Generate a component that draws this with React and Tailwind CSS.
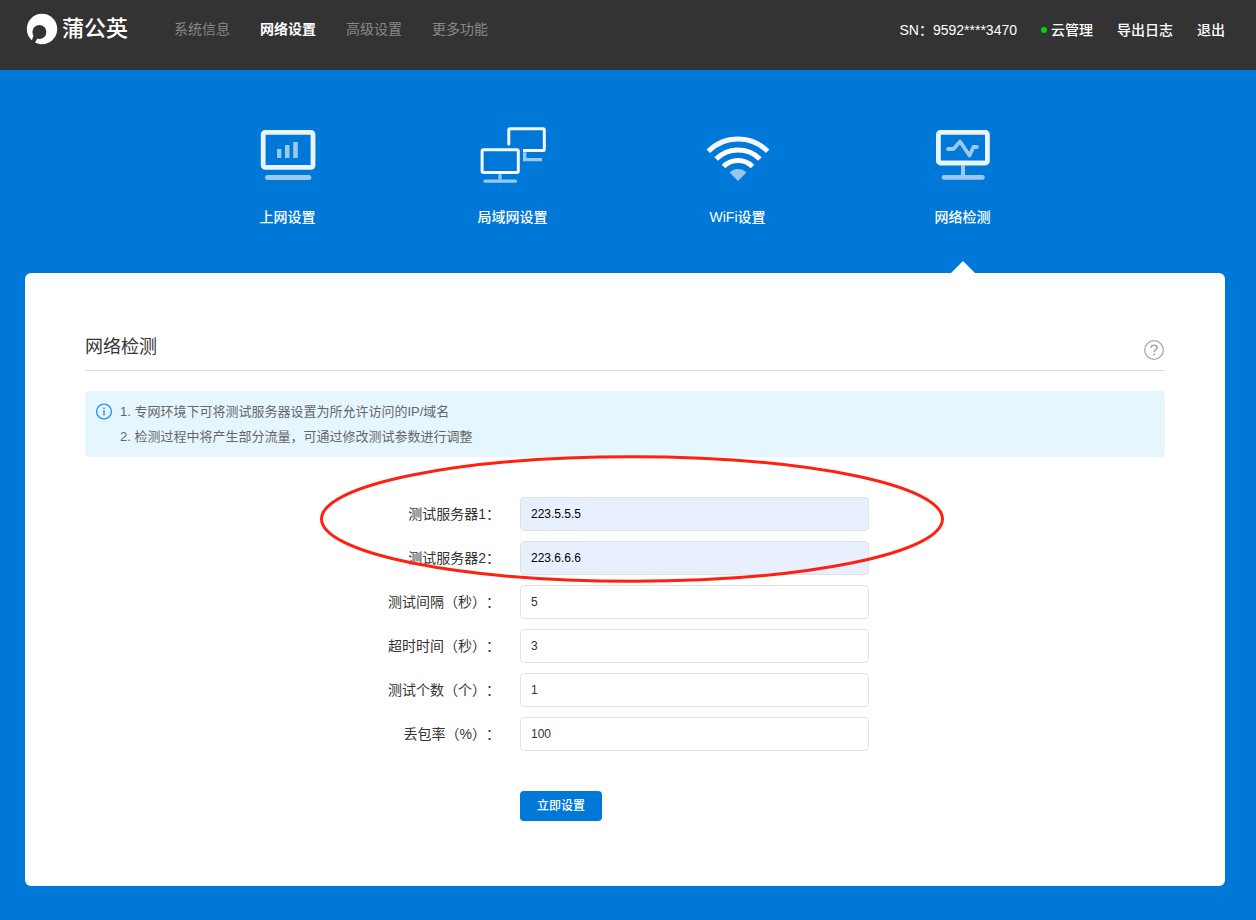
import { useState } from "react";

const topLinks = ["系统信息", "网络设置", "高级设置", "更多功能"];

// All fields in the detection form
const fields = [
  { id: "server1", label: "测试服务器1：", value: "223.5.5.5", filled: true },
  { id: "server2", label: "测试服务器2：", value: "223.6.6.6", filled: true },
  { id: "interval", label: "测试间隔（秒）：", value: "5" },
  { id: "timeout", label: "超时时间（秒）：", value: "3" },
  { id: "count", label: "测试个数（个）：", value: "1" },
  { id: "loss", label: "丢包率（%）：", value: "100" },
];

function Logo() {
  return (
    <a href="#" className="flex items-center gap-1 text-white">
      <svg width="32" height="32" viewBox="0 0 32 32" aria-hidden="true">
        <circle cx="16" cy="16" r="15.2" fill="#fff" />
        <circle cx="13.4" cy="19" r="7" fill="#333" />
        <path d="M7.4 22.5L6.2 26.6L3 30L8.2 31.5L9.2 29.2L11.4 25.5Z" fill="#333" />
      </svg>
      <span className="text-[22px] leading-8 font-medium">蒲公英</span>
    </a>
  );
}

function InternetIcon() {
  return (
    <svg width="70" height="60" viewBox="0 0 70 60" fill="none" aria-hidden="true">
      <rect x="10.2" y="7.4" width="49.8" height="35" rx="2" stroke="#eaf4fd" strokeWidth="4.8" />
      <g fill="#fff" fillOpacity="0.6">
        <rect x="24" y="24" width="4.3" height="9" />
        <rect x="32" y="20" width="4.5" height="13" />
        <rect x="40.2" y="17" width="4.6" height="16" />
        <rect x="12" y="50" width="46.3" height="5" rx="2.5" />
      </g>
    </svg>
  );
}

function LanIcon() {
  return (
    <svg width="70" height="60" viewBox="0 0 70 60" fill="none" aria-hidden="true">
      <rect x="4.1" y="24.8" width="36.2" height="22.8" rx="1.5" stroke="#f4f9fe" strokeWidth="3" />
      <path d="M30.8 19V5.2Q30.8 3.8 32.2 3.8H64.8Q66.3 3.8 66.3 5.2V24.2Q66.3 25.6 64.8 25.6H45" stroke="#f4f9fe" strokeWidth="3" />
      <circle cx="30.8" cy="19" r="1.5" fill="#fff" />
      <g stroke="#fff" strokeOpacity="0.6" strokeWidth="3.4">
        <path d="M46.7 27.3V34.6H64" />
        <path d="M22 49.3V54.4" />
        <path d="M7 56.1H37.5" strokeLinecap="round" />
      </g>
    </svg>
  );
}

function WifiIcon() {
  return (
    <svg width="70" height="60" viewBox="0 0 70 60" fill="none" aria-hidden="true">
      <g stroke="#fff" strokeWidth="5">
        <path d="M5.3 26.3A42 42 0 0 1 64.7 26.3" strokeOpacity="0.94" />
        <path d="M13.1 34.1A31 31 0 0 1 56.9 34.1" />
        <path d="M20.5 41.5A20.5 20.5 0 0 1 49.5 41.5" />
      </g>
      <path d="M35 56L26.5 47.5A12 12 0 0 1 43.5 47.5Z" fill="#fff" fillOpacity="0.58" />
    </svg>
  );
}

function DetectIcon() {
  return (
    <svg width="70" height="60" viewBox="0 0 70 60" fill="none" aria-hidden="true">
      <rect x="10.4" y="7.4" width="49" height="30.6" rx="2" stroke="#eaf4fd" strokeWidth="4.8" />
      <g stroke="#fff" strokeOpacity="0.6">
        <path d="M20 24H25.5L32 16.5L41.5 30.5L45.5 22H49" strokeWidth="3.8" strokeLinecap="round" strokeLinejoin="round" />
        <path d="M35 40.4V50" strokeWidth="4" />
        <path d="M16 52.4H54.5" strokeWidth="4.6" strokeLinecap="round" />
      </g>
    </svg>
  );
}

const tabs = [
  { name: "上网设置", Icon: InternetIcon },
  { name: "局域网设置", Icon: LanIcon },
  { name: "WiFi设置", Icon: WifiIcon },
  { name: "网络检测", Icon: DetectIcon },
];

function Header() {
  return (
    <header className="flex h-[70px] items-start justify-between bg-[#333] pr-[31px] pl-[26px] text-sm">
      <div className="flex h-[58px] items-center">
        <Logo />
        <nav className="ml-[46px] flex gap-[30px]">
          {topLinks.map((link) => (
            <a
              key={link}
              href="#"
              className={
                link === "网络设置" ? "font-bold text-white" : "text-[#888]"
              }>
              {link}
            </a>
          ))}
        </nav>
      </div>
      <div className="flex h-[60px] items-center gap-6 font-medium text-white">
        <span>SN：9592****3470</span>
        <a href="#" className="flex items-center gap-1">
          <span className="size-1.5 rounded-full bg-[#00d20d]" />
          云管理
        </a>
        <a href="#">导出日志</a>
        <a href="#">退出</a>
      </div>
    </header>
  );
}

function App() {
  const [activeTab, setActiveTab] = useState("网络检测");
  const [values, setValues] = useState(
    Object.fromEntries(fields.map((f) => [f.id, f.value]))
  );

  // Update one field by its id
  const changeValue = (e) => {
    setValues({ ...values, [e.target.id]: e.target.value });
  };

  return (
    <div className="min-h-screen bg-[#0078d7] font-['Liberation_Sans','Noto_Sans_CJK_SC',sans-serif] text-[#333]">
      <Header />
      <main className="pr-[31px] pb-[34px] pl-[25px]">
        <nav className="mx-auto flex max-w-[900px] pt-[55px]">
          {tabs.map(({ name, Icon }) => (
            <button
              key={name}
              type="button"
              onClick={() => setActiveTab(name)}
              className="flex flex-1 cursor-pointer flex-col items-center text-sm font-medium text-white">
              <Icon />
              <span className="mt-[22px] mb-[34px]">{name}</span>
              <svg width="24" height="12" viewBox="0 0 24 12" aria-hidden="true">
                {activeTab === name && <path d="M0 12L12 0L24 12Z" fill="#fff" />}
              </svg>
            </button>
          ))}
        </nav>

        <section className="rounded-md bg-white px-[60px] pt-[60px] pb-[65px]">
          <div className="flex items-start justify-between border-b border-[#ddd] pb-[9px]">
            <h1 className="text-lg leading-7">网络检测</h1>
            <button type="button" aria-label="帮助" className="mt-[6px] cursor-pointer">
              <svg width="22" height="22" viewBox="0 0 22 22" fill="none" stroke="#aaa" aria-hidden="true">
                <circle cx="11" cy="11" r="9.3" strokeWidth="1.3" />
                <path d="M8 8.9C8 7 9.3 6.2 11 6.2C12.8 6.2 14 7.2 14 8.7C14 10.7 11.1 10.7 11.1 13.3" strokeWidth="1.6" />
                <path d="M11.1 14.8V16.4" strokeWidth="1.7" />
              </svg>
            </button>
          </div>

          <div className="mt-5 flex rounded bg-[#e5f6ff] py-2 pl-[10px] text-[13px] leading-[25px] text-[#666]">
            <svg width="18" height="25" viewBox="0 0 18 25" fill="none" stroke="#1c94f5" aria-hidden="true">
              <circle cx="9" cy="12.5" r="7.4" strokeWidth="1.3" />
              <path d="M9 11.2V16.4M9 8.4V10" strokeWidth="1.5" />
            </svg>
            <div className="ml-[7px]">
              <p>1. 专网环境下可将测试服务器设置为所允许访问的IP/域名</p>
              <p>2. 检测过程中将产生部分流量，可通过修改测试参数进行调整</p>
            </div>
          </div>

          <form className="relative mt-10" onSubmit={(e) => e.preventDefault()}>
            <div className="flex flex-col gap-[10px]">
              {fields.map((field) => (
                <div key={field.id} className="flex items-center">
                  <label
                    htmlFor={field.id}
                    className="w-[435px] shrink-0 pr-5 text-right text-sm [text-spacing-trim:space-all]">
                    {field.label}
                  </label>
                  <input
                    id={field.id}
                    type="text"
                    value={values[field.id]}
                    onChange={changeValue}
                    className={`h-[34px] w-full max-w-[349px] rounded border border-[#e2e2e2] px-[10px] text-xs outline-none ${
                      field.filled ? "bg-[#e8f0fe] text-black" : "bg-white"
                    }`}
                  />
                </div>
              ))}
            </div>
            <button
              type="submit"
              className="mt-10 ml-[435px] h-[30px] w-[82px] cursor-pointer rounded bg-[#0078d7] text-xs font-medium text-white">
              立即设置
            </button>

            {/* Red ring around the two test servers */}
            <svg
              width="624"
              height="128"
              viewBox="0 0 624 128"
              fill="none"
              aria-hidden="true"
              className="pointer-events-none absolute -top-[42px] left-[235px]">
              <ellipse cx="312" cy="64" rx="310.5" ry="62.2" stroke="#ff2010" strokeWidth="3" />
            </svg>
          </form>
        </section>
      </main>
    </div>
  );
}

export default App;
